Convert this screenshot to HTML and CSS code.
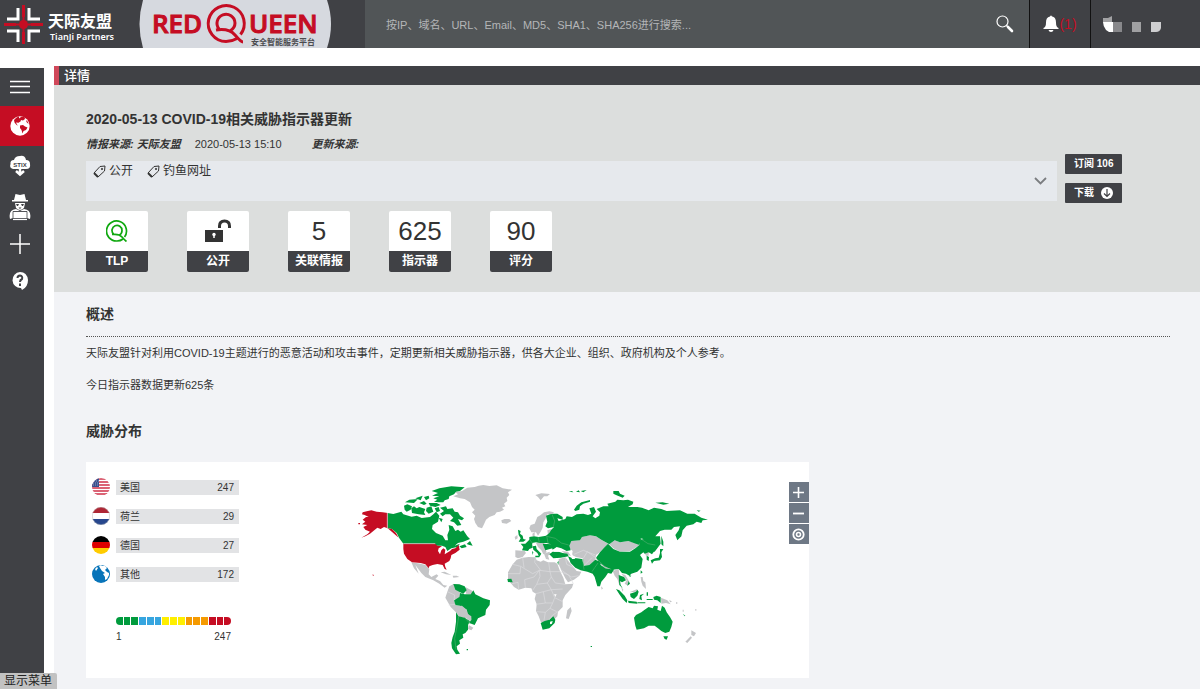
FILE: index.html
```html
<!DOCTYPE html>
<html lang="zh-CN">
<head>
<meta charset="utf-8">
<title>RedQueen 安全智能服务平台</title>
<link rel="stylesheet" href="styles.css">
</head>
<body>
<header class="topbar">
  <div class="brand">
    <svg class="brand-art" width="365" height="48" viewBox="0 0 365 48" role="img" aria-label="天际友盟 RedQueen">
      <path d="M143 0H327Q335 24 327 48H143Q136 24 143 0Z" fill="#d6d9df"/>
      <path d="M18 8V19H7M29 8V19H40M18 42V31H7M29 42V31H40" fill="none" stroke="#fff" stroke-width="3"/>
      <path d="M23.500 5V17M23.500 32V44M4 24.500H16M31 24.500H43" stroke="#c50d23" stroke-width="3"/>
      <path d="M23.500 16V33M15 24.500H32" stroke="#c50d23" stroke-width="2"/>
      <circle cx="23.500" cy="24.500" r="4.500" fill="#c50d23"/>
      <text class="brand-cn" x="48" y="27">天际友盟</text>
      <text class="brand-en" x="50" y="40">TianJi Partners</text>
      <text class="brand-queen" x="152" y="33">RED</text>
      <text class="brand-queen" x="249" y="33">UEEN</text>
      <g fill="none" stroke="#c50d23" stroke-width="3">
        <path d="M240.500 34.500A18 18 0 1 0 226 41.500Q232 41.500 237 38.500"/>
        <path d="M230 31Q235 28 235 23A9 9 0 1 0 219 29M216 30Q229 28 235 35T243 42"/>
      </g>
      <text class="brand-sub" x="251" y="45">安全智能服务平台</text>
    </svg>
  </div>
  <form class="search">
    <input class="search-input" type="text" aria-label="搜索" placeholder="按IP、域名、URL、Email、MD5、SHA1、SHA256进行搜索...">
    <button class="plain search-button" type="button" aria-label="搜索">
      <svg width="18" height="18" viewBox="0 0 18 18" fill="none" stroke="#fff"><circle cx="6.500" cy="6.500" r="5.500" stroke-width="1.200"/><path d="M10.500 10.500 12 12" stroke-width="1.500"/><path d="M12 12 16 16" stroke-width="2.600" stroke-linecap="round"/></svg>
    </button>
  </form>
  <button class="plain notice" type="button" aria-label="通知 1">
    <svg width="16" height="18" viewBox="0 0 16 18" fill="#fff"><path d="M7 1.500Q8-.5 9 1.500C12 2 13 4.500 13 7.500C13 10.500 13.500 12 15.500 13V14H.5V13C2.500 12 3 10.500 3 7.500C3 4.500 4 2 7 1.500ZM5.500 15H10.500Q10 17 8 17T5.500 15Z"/></svg>
    <span>(1)</span>
  </button>
  <button class="plain user" type="button" aria-label="用户">
    <svg width="60" height="18" viewBox="0 0 60 18"><path d="M0 3H5L9 1V7H0Z" fill="#a2a2a4"/><path d="M0 7H10V17H6L3 15Q0 11 0 7Z" fill="#fff"/><path d="M10 7H19V17H10Z" fill="#88888b"/><path d="M29 7H38V17H29Z" fill="#a0a0a2"/><path d="M48 7H58V13Q57 17 53 17H48Z" fill="#ceced0"/></svg>
  </button>
</header>

<div class="shell">
  <nav class="sidebar" aria-label="主菜单">
    <a class="side-item menu" href="#" aria-label="显示菜单"><svg width="20" height="20" viewBox="0 0 20 20"><path d="M0 4.500H20M0 9.500H20M0 15.500H20" stroke="#fff" stroke-width="1.500"/></svg></a>
    <a class="side-item active" href="#" aria-label="详情"><svg width="20" height="20" viewBox="0 0 20 20"><circle cx="10" cy="10" r="9.700" fill="#fff"/><path d="M6.500 1.500 9 .5 9 2.500 11 1 14.500 1 15 3 13 4.500 11 4 10.500 5.500 8 7 6.500 6 6.500 8 8 9.500 6.500 9 4.500 6.500 4 4ZM10 9.500 13 9 15 10.500 17.500 11.500 16 14 13.500 15 12.500 17.500 11.500 14 10 12ZM16 4 18 6 18.500 8 16.500 6Z" fill="#c50d23"/></svg></a>
    <a class="side-item" href="#" aria-label="STIX"><svg width="22" height="22" viewBox="0 0 22 22"><path d="M4 14Q0 13 1.500 9Q1 5 5 5Q6 1 11 1Q16 0 17 5Q21 5 21 9Q22 14 17 14Z" fill="#fff"/><path d="M11 13V19M7 16 11 19.500 15 16" fill="none" stroke="#fff" stroke-width="2.500"/><text class="stix" x="11" y="12">STIX</text></svg></a>
    <a class="side-item tall" href="#" aria-label="威胁分析"><svg width="22" height="28" viewBox="0 0 22 28" fill="#fff"><path d="M6.500 1 11 2 15.500 1 17 7H19V8.500H3V7H5ZM6 10H16L15 15Q11 19 7 15ZM1 26Q-1 17 7 16L11 18 15 16Q23 17 21 26L18 25V18H4V25Z"/><path d="M7 11H10L9 13H8ZM12 11H15L14 13H13ZM9.500 14.500H12.500L11 16Z" fill="#404145"/><path d="M4 18.500H18V25.500H4Z" fill="#fff" stroke="#404145" stroke-width=".8"/><path d="M4 26.500H18" stroke="#fff" stroke-width="1.200"/></svg></a>
    <a class="side-item short" href="#" aria-label="添加"><svg width="20" height="20" viewBox="0 0 20 20"><path d="M0 10H20M10 0V20" stroke="#fff" stroke-width="1.500"/></svg></a>
    <a class="side-item tall" href="#" aria-label="帮助"><svg width="20" height="20" viewBox="0 0 20 20"><path d="M10 1A8 8 0 1 0 11 17L12 19Q18 16 18 9Q17 1 10 1Z" fill="#fff"/><path d="M7.500 7Q7.500 4.500 10 4.500Q13 5 12 8Q10 9 10 11M10 12.500V15" fill="none" stroke="#404145" stroke-width="2"/></svg></a>
  </nav>

  <main class="main">
    <h1 class="titlebar">详情</h1>
    <section class="hero">
      <div class="hero-top">
        <div class="hero-info">
          <h2 class="report-title">2020-05-13 COVID-19相关威胁指示器更新</h2>
          <p class="meta"><em>情报来源: 天际友盟</em><time>2020-05-13 15:10</time><em>更新来源:</em></p>
          <div class="tags">
            <ul class="tag-list">
              <li class="tag"><svg width="13" height="13" viewBox="0 0 13 13" fill="none" stroke="#333"><path d="M1 8 7 1.500 12 1 11.500 6 5 12Z"/><path d="M1 8 5 12" stroke-width="2"/><circle cx="9" cy="4" r=".7"/></svg>公开</li>
              <li class="tag"><svg width="13" height="13" viewBox="0 0 13 13" fill="none" stroke="#333"><path d="M1 8 7 1.500 12 1 11.500 6 5 12Z"/><path d="M1 8 5 12" stroke-width="2"/><circle cx="9" cy="4" r=".7"/></svg>钓鱼网址</li>
            </ul>
            <button class="plain" type="button" aria-label="展开标签"><svg width="13" height="8" viewBox="0 0 13 8"><path d="M1 1 6.500 6.500 12 1" fill="none" stroke="#7b7d80" stroke-width="1.800"/></svg></button>
          </div>
        </div>
        <div class="actions">
          <button class="action" type="button">订阅 106</button>
          <button class="action" type="button">下载<svg width="12" height="12" viewBox="0 0 12 12"><circle cx="6" cy="6" r="6" fill="#fff"/><path d="M6 2V9.500M3 6.500 6 9.500 9 6.500" fill="none" stroke="#404145" stroke-width="1.200"/></svg></button>
        </div>
      </div>
      <dl class="stats">
        <div class="stat"><dt>TLP</dt><dd><svg width="22" height="22" viewBox="0 0 44 44" fill="none" stroke="#10a810" stroke-width="3.400"><path d="M37 34A20 20 0 1 0 22 42Q29 42 34 38"/><path d="M27 30Q32 27 32 21A10 10 0 1 0 15 28M12 29Q26 27 32 34T41 43"/></svg></dd></div>
        <div class="stat"><dt>公开</dt><dd><svg width="26" height="24" viewBox="0 0 26 24"><path d="M14.500 9V7Q14.500 2 19.500 2T24.500 7V9" fill="none" stroke="#333" stroke-width="3"/><path d="M0 11H18V23H0Z" fill="#333"/><circle cx="9" cy="15.500" r="1.700" fill="#fff"/><path d="M9 15V19" stroke="#fff" stroke-width="1.500"/></svg></dd></div>
        <div class="stat"><dt>关联情报</dt><dd>5</dd></div>
        <div class="stat"><dt>指示器</dt><dd>625</dd></div>
        <div class="stat"><dt>评分</dt><dd>90</dd></div>
      </dl>
    </section>

    <section class="content">
      <h2 class="heading overview">概述</h2>
      <p class="para">天际友盟针对利用COVID-19主题进行的恶意活动和攻击事件，定期更新相关威胁指示器，供各大企业、组织、政府机构及个人参考。</p>
      <p class="para second">今日指示器数据更新625条</p>
      <h2 class="heading">威胁分布</h2>
      <div class="grid">
        <div class="panel">
          <div class="ranking">
            <ul class="countries">
              <li class="country"><svg width="18" height="18" viewBox="0 0 18 18"><clipPath id="flag"><circle cx="9" cy="9" r="9"/></clipPath><g clip-path="url(#flag)"><path d="M0 0H18V18H0Z" fill="#fff"/><path d="M0 1H18M0 4H18M0 7H18M0 10H18M0 13H18M0 16H18" stroke="#cf3048" stroke-width="1.500"/><path d="M0 0H7V9H0Z" fill="#374f8c"/><path d="M2 3H7M1 5H7M1 7H7" stroke="#aab5d1" stroke-width=".8" stroke-dasharray="1 1"/></g></svg><span class="bar"><span>美国</span><span>247</span></span></li>
              <li class="country"><svg width="18" height="18" viewBox="0 0 18 18"><g clip-path="url(#flag)"><path d="M0 0H18V6H0Z" fill="#ae2634"/><path d="M0 6H18V12H0Z" fill="#fff"/><path d="M0 12H18V18H0Z" fill="#27478d"/></g><circle cx="9" cy="9" r="8.700" fill="none" stroke="#bbb" stroke-width=".5"/></svg><span class="bar"><span>荷兰</span><span>29</span></span></li>
              <li class="country"><svg width="18" height="18" viewBox="0 0 18 18"><g clip-path="url(#flag)"><path d="M0 0H18V6H0Z"/><path d="M0 6H18V12H0Z" fill="#d00"/><path d="M0 12H18V18H0Z" fill="#fc0"/></g></svg><span class="bar"><span>德国</span><span>27</span></span></li>
              <li class="country"><svg width="18" height="18" viewBox="0 0 18 18"><circle cx="9" cy="9" r="9" fill="#0874b9"/><path d="M7 1 9 0 10 1 13 1 15 3 13 5 15 7 17 8 17 10 15 14 13 15 13 12 11 9 13 8 10 6 8 3ZM3 4 5 2 6 3 4 6Z" fill="#fff"/></svg><span class="bar"><span>其他</span><span>172</span></span></li>
            </ul>
            <div class="legend">
              <div class="scale"><i class="green"></i><i class="green"></i><i class="green"></i><i class="blue"></i><i class="blue"></i><i class="blue"></i><i class="yellow"></i><i class="yellow"></i><i class="yellow"></i><i class="orange"></i><i class="orange"></i><i class="orange"></i><i class="red"></i><i class="red"></i><i class="red"></i></div>
              <div class="range"><span>1</span><span>247</span></div>
            </div>
          </div>
          <svg class="map" viewBox="0 0 1110 570" role="img" aria-label="威胁分布地图">
            <g class="none">
              <path d="M184 262 212 266 226 270 238 282 236 298 244 306 260 298 265 302 256 312 270 318 280 330 292 332 284 338 268 326 250 316 226 306 214 294 196 270 206 296 192 280ZM272 292 284 290 304 300 288 298ZM308 302 320 302 328 306 310 308Z"/>
              <path d="M298 334 312 326 316 342 330 352 328 368 312 374 316 390 330 392 352 408 364 424 364 436 350 430 328 426 320 414 302 396 286 368 292 350ZM346 336 368 348 364 358 348 356ZM356 450 370 458 364 466 354 462Z"/>
              <path d="M310 64 324 58 316 52 336 48 352 38 374 36 386 32 400 30 418 33 440 31 458 40 486 44 474 52 478 60 470 68 472 78 462 86 466 94 456 98 462 104 450 110 440 112 434 120 418 126 408 134 402 148 396 160 384 156 376 144 372 132 376 122 366 112 374 104 366 96 360 82 344 72 330 70ZM454 136 464 132 478 132 484 138 470 146 456 144Z"/>
            </g>
            <g class="hit">
              <path d="M113 114 130 117 154 110 160 118 185 125 200 122 215 129 240 126 250 118 258 110 268 122 264 140 248 150 246 162 258 174 278 182 286 196 294 196 292 180 298 164 296 150 308 154 316 168 324 164 332 170 340 166 352 184 360 192 340 200 324 204 314 212 330 206 322 216 304 220 292 228 286 216 276 212 256 212 254 206 160 206 148 190 140 174 126 162 113 160ZM350 207 360 198 368 212 358 210ZM328 214 345 208 350 216 335 220Z"/>
              <path d="M245 48 268 40 304 34 344 37 330 48 318 50 312 58 298 64 296 72 284 76 280 82 266 82 252 80 262 74 250 70 268 64 246 62 264 54ZM162 92 172 88 186 94 182 104 170 110 164 104ZM184 100 192 94 200 100 208 96 226 102 222 112 226 120 206 118 186 114ZM165 82 178 74 204 72 192 84ZM196 70 218 62 212 76ZM222 66 236 62 238 70 228 76ZM208 84 222 78 230 86 222 90ZM236 84 260 84 272 90 256 96 240 92ZM230 98 244 94 250 110 236 116 228 108ZM254 100 266 96 270 108 260 112ZM270 98 288 94 292 102 308 100 314 110 324 112 330 122 342 130 336 136 324 132 334 150 322 152 312 142 300 138 310 128 300 118 286 118 278 124 270 116 282 108ZM266 128 278 132 274 142Z"/>
              <path d="M310 327 328 328 344 334 350 346 340 356 330 352 316 344ZM312 376 328 366 330 354 344 358 362 358 370 346 376 358 400 370 420 376 419 390 408 404 406 420 384 430 374 450 358 444 364 432 354 416 350 404 330 392 316 390ZM318 412 326 424 344 428 360 438 354 450 354 464 346 474 338 478 340 488 328 496 330 506 320 514 322 524 330 536 318 538 306 520 304 504 308 486 314 470 318 440ZM350 522H354V526H350Z"/>
            </g>
            <g class="none">
              <path d="M322 394 336 392 350 404 352 416 364 424 364 436 356 436 350 430 340 422 326 424Z"/>
            </g>
            <g class="top">
              <path d="M38 112 50 109 64 106 80 110 98 112 113 114 113 160 102 156 92 162 82 158 70 168 60 176 46 184 34 188 52 178 60 170 46 164 40 156 52 150 36 148 46 140 38 134 48 126 56 126 44 120 36 118ZM113 160 126 162 138 174 146 188 134 178 120 166ZM25 144H30V148H25ZM66 299 71 299 71 303Z"/>
              <path d="M160 206 255 206 262 212 276 214 266 220 264 228 270 238 274 226 280 220 286 224 284 238 300 228 306 222 316 220 326 210 329 224 316 234 304 240 302 250 298 258 284 266 286 276 290 284 284 282 278 270 262 267 248 270 238 274 236 280 226 268 212 264 186 262 172 252 162 236 160 222Z"/>
            </g>
            <g transform="translate(450 0)">
              <g class="none">
                <path d="M106 60 124 55 150 57 142 64 132 64 122 76 114 66ZM88 160 92 150 104 146 112 126 122 120 132 112 148 109 162 112 156 118 142 118 136 132 130 142 128 158 122 170 114 182 108 172 94 172ZM44 186 52 180 53 190 46 194ZM142 166 154 162 156 178 144 180ZM97 176 104 172 104 184 98 184Z"/>
                <path d="M46 226 74 228 78 234 68 246 54 250 46 246ZM132 236 148 230 152 236 144 242 148 254 138 252ZM108 204 124 200 134 206 134 216 140 232 130 238 124 226 114 216Z"/>
                <path d="M176 252 196 247 208 262 222 278 230 288 244 290 238 302 222 314 204 322 196 310 186 290 176 268Z"/>
                <path d="M50 254 68 248 86 246 106 247 110 256 122 260 130 256 144 262 164 262 172 266 180 288 190 308 196 328 220 326 216 338 196 360 188 376 188 396 174 410 172 424 164 432 148 434 132 446 122 440 116 424 108 408 110 388 104 372 108 356 98 350 94 340 76 338 56 344 42 336 34 326 24 316 24 292 38 268ZM202 406 212 396 215 408 206 432 198 430Z"/>
                <path d="M208 208 214 198 240 196 246 186 270 181 288 184 304 194 324 206 312 218 300 232 288 240 286 256 268 270 252 272 248 250 228 246 216 240 218 228 208 220ZM184 228 204 230 214 242 202 240ZM328 208 344 196 360 202 385 198 406 204 418 210 404 220 390 228 360 230 340 220ZM302 266 318 274 338 276 336 284 312 278ZM338 288 356 282 358 298 362 318 358 330 352 312 344 302ZM364 296 376 300 388 320 384 332 374 326 380 316ZM434 234 446 230 446 242 438 242ZM422 306 428 306 430 318 436 322 438 342 428 332 424 320ZM388 352 412 342 410 350ZM483 368 502 376 512 388 498 384 484 386ZM303 334 309 340 305 344ZM362 332 370 344 368 350Z"/>
                <path d="M574 466 588 474 582 484 574 480ZM572 484 576 488 562 504 556 500ZM508 374 516 380 510 382ZM528 382H532V386H528ZM548 404H551V410H548ZM586 402H589V407H586Z"/>
              </g>
              <g class="hit">
                <path d="M160 116 172 116 188 126 188 134 172 130 176 138 196 132 200 124 216 126 230 118 250 116 264 120 274 116 268 100 282 96 288 110 278 124 286 130 298 122 300 112 290 102 310 94 326 94 322 86 346 80 352 74 370 76 384 74 400 80 398 88 384 96 412 96 426 98 446 106 462 98 484 102 500 108 540 106 562 116 584 116 604 128 624 134 608 136 604 144 590 140 580 148 560 152 548 166 544 184 532 196 526 180 536 166 540 154 522 156 514 164 494 164 480 168 466 184 480 184 482 206 464 230 448 226 444 212 438 196 424 190 418 210 385 198 360 202 344 196 328 208 304 194 288 184 270 181 246 186 240 196 214 198 208 212 212 226 200 228 184 220 170 216 158 224 152 208 140 204 120 204 108 202 96 204 98 218 88 222 84 228 66 226 70 216 62 206 76 206 88 194 88 186 102 184 116 186 138 182 148 174 154 164 162 156 144 160 136 154 142 140 138 122 150 118Z"/>
                <path d="M54 164 62 168 60 176 68 182 70 192 78 194 70 200 56 200 62 190 56 180ZM98 214 108 212 110 222 124 236 118 246 112 234 100 224ZM106 242H118V247H106ZM96 228 100 232 98 240ZM128 206 156 208 158 220 136 226ZM148 238 158 230 176 230 188 234 202 236 206 244 182 248 160 250Z"/>
                <path d="M312 218 324 206 340 222 360 230 390 230 406 220 418 210 420 196 438 190 448 206 466 208 472 216 456 238 446 232 434 236 430 232 420 240 428 252 424 278 412 290 394 296 388 302 378 296 366 294 356 282 338 284 318 276 302 266 288 248 300 232ZM204 244 214 248 230 250 246 252 252 272 268 270 286 254 300 260 302 270 316 280 342 284 334 296 324 294 316 306 304 320 300 334 292 334 284 306 278 296 262 290 242 286 226 278 212 264ZM356 300 372 306 378 316 366 322 360 318 362 330 368 340 358 330ZM386 318 390 326 382 332ZM440 242 447 246 446 258 440 254ZM452 256 466 250 476 248 480 234 480 222 490 222 484 232 486 246 480 256 462 258 456 266ZM484 182 490 200 490 214 484 208ZM422 286 428 292 422 296ZM386 300 394 302 390 306ZM172 262 176 258 175 270Z"/>
                <path d="M348 342 358 346 374 362 382 376 380 384 368 372 358 358ZM384 377 410 380 412 386 386 384ZM390 356 408 350 412 344 416 350 412 362 402 372 392 366ZM420 360 432 356 424 364 426 376 418 372ZM412 382H436V385H412ZM440 352H444V362H440ZM440 372H458V375H440ZM460 366 470 362 482 366 482 384 472 376 462 374Z"/>
                <path d="M402 428 408 420 424 412 434 404 446 396 458 400 462 392 474 394 472 404 482 408 486 392 494 398 500 412 510 426 518 440 514 456 508 470 496 474 484 468 474 460 464 452 446 452 432 460 410 464 406 452ZM490 484 504 484 500 494 494 492ZM548 416 556 422 554 424ZM272 513H276V516H272Z"/>
                <path d="M222 104 230 92 244 82 270 75 270 80 250 86 240 94 238 104 226 108ZM340 48 356 48 360 56 374 62 368 68 348 60 340 56ZM466 83 488 82 508 86 490 89ZM590 106 602 107 596 110ZM206 50 216 48 220 52ZM228 50 236 46 240 52ZM242 48 260 45 250 52ZM122 444 134 438 148 434 160 424 166 434 164 444 148 460 128 464ZM22 312 34 311 38 322 24 321Z"/>
              </g>
              <path d="M206 232 214 228 218 242 226 252 216 252 212 240ZM158 224 182 222 186 230 162 230ZM150 440 158 438 156 446 150 448ZM162 358 170 358 166 366Z" fill="#fff"/>
              <path class="borders" d="M38 268 62 274 98 296 118 286 150 290 180 290M68 248 72 278M106 248 104 262 122 286M146 262 150 290M24 296 60 296 62 274M56 344 54 322 36 326M76 338 74 314 102 306 118 286M98 346 110 328 120 304 118 286M110 328 142 324 154 306 150 290M154 306 166 324 196 328M142 324 154 344 188 342M108 356 130 350 154 344M130 350 136 384 108 388M136 384 158 384 164 368 188 380M154 344 164 368M110 410 136 412 150 400 158 384M136 412 132 436M150 400 170 410M148 434 158 420 174 410M180 290 206 300 220 326M196 247 200 268 222 278M182 284 214 306 236 302M222 238 250 226 286 240M250 250 262 230 290 250M252 272 276 248"/>
              <path class="borders land" d="M114 186 118 202M140 182 144 204M140 184 166 190 184 204 206 210M156 118 164 138 160 156M420 190 444 206 466 210M288 250 316 276M276 290 284 278 294 264M248 252 252 284M88 192 98 206"/>
            </g>
            <path class="borders" d="M292 350 314 360 312 376M296 390 316 388M112 114V160M160 206H256"/>
            <path class="borders land" d="M326 424 322 450 314 490 318 524M344 428 360 446"/>
          </svg>
          <div class="zoom">
            <button class="plain zoom-button" type="button" aria-label="放大"><svg width="13" height="13" viewBox="0 0 13 13"><path d="M1 6.500H12M6.500 1V12" stroke="#fff" stroke-width="1.600"/></svg></button>
            <button class="plain zoom-button" type="button" aria-label="缩小"><svg width="13" height="13" viewBox="0 0 13 13"><path d="M1 6.500H12" stroke="#fff" stroke-width="1.800"/></svg></button>
            <button class="plain zoom-button" type="button" aria-label="复位"><svg width="13" height="13" viewBox="0 0 13 13" fill="none" stroke="#fff"><circle cx="6.500" cy="6.500" r="5.200" stroke-width="1.800"/><circle cx="6.500" cy="6.500" r="2" stroke-width="1.600"/></svg></button>
          </div>
        </div>
      </div>
    </section>
  </main>
</div>
<div class="status">显示菜单</div>
</body>
</html>
```

FILE: styles.css
```css
* { box-sizing: border-box; }

body {
  margin: 0;
  min-height: 100vh;
  display: flex;
  flex-direction: column;
  background: #fff;
  color: #333;
  font: 12px/20px "Liberation Sans", "Noto Sans CJK SC", sans-serif;
}

h1, h2, p, ul, dl, dd { margin: 0; padding: 0; }
ul { list-style: none; }
svg { display: block; flex: none; }

.plain {
  display: flex;
  align-items: center;
  justify-content: center;
  padding: 0;
  border: 0;
  background: none;
  font: inherit;
}

.topbar { display: flex; height: 48px; background: #404145; }
.brand { flex: none; }
.brand-cn { font: bold 16px "Noto Sans CJK SC", sans-serif; fill: #fff; }
.brand-en { font: 600 9px "Noto Sans", sans-serif; fill: #fff; }
.brand-queen {
  font: 600 26px "Open Sans", sans-serif;
  fill: #c50d23;
  stroke: #c50d23;
  stroke-width: 1px;
}
.brand-sub { font: bold 8px "Noto Sans CJK SC", sans-serif; fill: #4b4c50; }

.search {
  flex: 1;
  display: flex;
  padding: 0 15px 0 21px;
  background: #515557;
}
.search-input {
  flex: 1;
  min-width: 0;
  padding: 2px 0 0;
  border: 0;
  outline: 0;
  background: none;
  color: #fff;
  font: inherit;
  font-size: 11px;
}
.search-input::placeholder { color: #b4b6b7; opacity: 1; }
.search-button { width: 18px; }
.notice {
  width: 61px;
  border-left: 1px solid #111;
  color: #c50d23;
  font-size: 14px;
}
.user {
  width: 110px;
  border-left: 1px solid #111;
  justify-content: flex-start;
  padding-left: 12px;
}

.shell { flex: 1; display: flex; gap: 10px; padding-top: 18px; }
.sidebar { width: 44px; margin-top: 2px; background: #404145; }
.side-item {
  display: flex;
  align-items: center;
  justify-content: center;
  height: 39px;
  padding-right: 4px;
}
.side-item.menu { height: 38px; }
.side-item.active { height: 40px; background: #c50d23; }
.side-item.tall { height: 43px; }
.side-item.short { height: 31px; }
.stix {
  font: bold 6px "Liberation Sans", sans-serif;
  text-anchor: middle;
  fill: #404145;
}

.main { flex: 1; min-width: 0; background: #f2f3f6; }
.titlebar {
  padding-left: 5px;
  border-left: 5px solid #d0485a;
  background: #404145;
  color: #fff;
  font-size: 13px;
  font-weight: 500;
  line-height: 19px;
}
.hero { padding: 24px 78px 20px 32px; background: #dcdedd; }
.hero-top { display: flex; gap: 8px; }
.hero-info { flex: 1; }
.report-title { font-size: 14px; line-height: 20px; }
.meta { display: flex; margin: 5px 0 7px; font-size: 11px; }
.meta em { font-weight: bold; }
.meta time { margin: 0 30px 0 14px; }
.tags {
  display: flex;
  justify-content: space-between;
  height: 40px;
  padding: 0 10px 0 7px;
  background: #e6e9ed;
}
.tag-list { display: flex; gap: 14px; }
.tag { display: flex; align-items: center; gap: 3px; height: 20px; }
.actions {
  display: flex;
  flex-direction: column;
  gap: 9px;
  width: 57px;
  margin-top: 45px;
}
.action {
  display: flex;
  align-items: center;
  justify-content: space-between;
  height: 20px;
  padding: 0 9px;
  border: 0;
  border-radius: 1px;
  background: #404145;
  color: #fff;
  font: bold 10px/20px "Liberation Sans", "Noto Sans CJK SC", sans-serif;
  white-space: nowrap;
}

.stats { display: flex; gap: 39px; margin-top: 8px; }
.stat {
  display: flex;
  flex-direction: column-reverse;
  width: 62px;
  border-radius: 2px;
  overflow: hidden;
  background: #fff;
  text-align: center;
}
.stat dt {
  background: #404145;
  color: #fff;
  font-weight: bold;
  line-height: 21px;
}
.stat dd {
  display: flex;
  align-items: center;
  justify-content: center;
  height: 40px;
  font-size: 26px;
}

.content { padding: 11px 30px 11px 32px; }
.heading { font-size: 14px; line-height: 22px; }
.overview { padding-bottom: 11px; border-bottom: 1px dotted #555; }
.para { margin-top: 6px; font-size: 11px; }
.second { margin: 12px 0 25px; }
.grid { display: grid; grid-template-columns: 2fr 1fr; margin-top: 20px; }
.panel {
  display: flex;
  min-height: 216px;
  background: #fff;
}
.ranking { width: 153px; padding: 16px 0 0 6px; }
.countries { display: flex; flex-direction: column; gap: 11px; }
.country { display: flex; align-items: center; gap: 6px; }
.bar {
  flex: 1;
  display: flex;
  justify-content: space-between;
  padding: 0 5px 0 4px;
  background: #e2e3e5;
  font-size: 10px;
  line-height: 15px;
}
.legend { margin: 34px 8px 0 24px; }
.scale { display: flex; gap: 1px; height: 8px; border-radius: 4px; overflow: hidden; }
.scale i { flex: 1; }
.green { background: #009b3d; }
.blue { background: #36a5df; }
.yellow { background: #ffef00; }
.orange { background: #f59a00; }
.red { background: #c50d23; }
.range {
  display: flex;
  justify-content: space-between;
  margin-top: 4px;
  font-size: 10px;
  line-height: 16px;
}

.map { width: 370px; margin: 13px auto 0 111px; align-self: flex-start; }
.none { fill: #c4c5c7; }
.hit { fill: #009b3d; }
.top { fill: #c50d23; }
.borders { fill: none; stroke: #dcdddf; stroke-width: 2; }
.borders.land { stroke: #4aae6c; }
.zoom { display: flex; flex-direction: column; gap: 1px; padding-top: 20px; }
.zoom-button { width: 20px; height: 20px; background: #6e7885; }

.status {
  position: fixed;
  left: 0;
  bottom: 0;
  width: 57px;
  padding-left: 4px;
  border-top-right-radius: 2px;
  background: #c2c2c2;
  color: #222;
  line-height: 16px;
}
```
